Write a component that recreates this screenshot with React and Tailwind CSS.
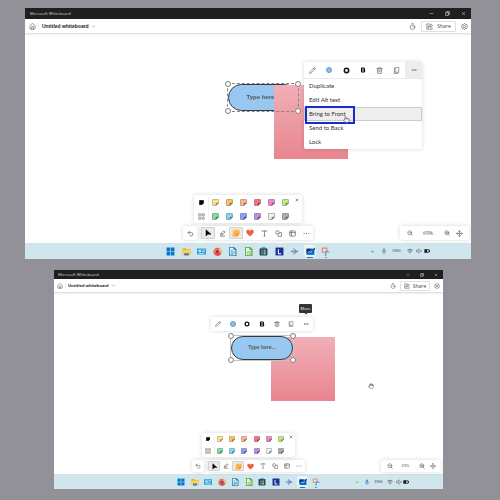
import React from "react";
import {
  Bold, ChevronDown, ChevronUp, Ellipsis, Hand, House, Minus, Move,
  Pencil, Pointer, Timer, Trash2, Undo2, X, ZoomIn, ZoomOut,
} from "lucide-react";

const large = {
  window: "ml-[25px] mr-[29px]",
  titleBar: "h-[11px] pl-[5px] text-[4px]",
  windowButton: "w-4 h-[11px]",
  header: "h-[14px] pl-[3px] pr-[2px]",
  title: "text-[5px] leading-[6px] font-['Liberation_Sans',sans-serif]",
  homeButton: "w-2 mr-[2px]",
  divider: "mr-[3px]",
  timer: "w-2 mr-[5px]",
  share: "h-[11px] w-[35px] gap-[4px] text-[5px]",
  settings: "w-[10px] ml-[3px]",
  canvas: "h-[210px] pb-[3px]",
  palette: "h-[28px] w-[108px] pr-[10px]",
  sticky: "size-[7px]",
  close: "top-[3px] right-[3px]",
  paletteDivider: "left-[14px]",
  undo: "w-[14px]",
  tools: "h-[14px] w-[112px]",
  toolButton: "h-[12px]",
  tool: "size-[8px]",
  zoom: "h-[14px] w-[69px] mr-[2px] text-[5px]",
  zoomText: "w-[24px]",
  zoomButton: "w-[13px]",
  taskbar: "h-[16px]",
  apps: "w-[165px]",
  app: "size-[10px]",
  appGlyph: "size-[9px]",
  tray: "mr-[40px] text-[4px]",
  chevronCell: "w-[11px]",
  langCell: "w-[15px]",
  trayCell: "w-[8px]",
  icon: "size-[7px]",
  trayIcon: "size-[6px]",
  smallIcon: "size-[5px]",
  pill: "left-[203px] top-[51px] w-[70px] h-[27px] text-[6px]",
  square: "left-[249px] top-[52px] size-[74px]",
  popup: "left-[279px] top-[29px] w-[118px]",
  popupBar: "h-[16px]",
};

const small = {
  window: "ml-[54px] mr-[57px]",
  titleBar: "h-[9px] pl-[4px] text-[4px]",
  windowButton: "w-[14px] h-[9px]",
  header: "h-[13px] pl-[2px] pr-[2px]",
  title: "text-[4px] leading-[5px] font-['Open_Sans',sans-serif]",
  homeButton: "w-2 mr-[1px]",
  divider: "mr-[2px]",
  timer: "w-[7px] mr-[4px]",
  share: "h-[10px] w-[30px] gap-[3px] text-[5px]",
  settings: "w-[8px] ml-[3px]",
  canvas: "h-[182px] pb-[2px]",
  palette: "h-[24px] w-[93px] pr-[8px]",
  sticky: "size-[6px]",
  close: "top-[2px] right-[2px]",
  paletteDivider: "left-[12px]",
  undo: "w-[12px]",
  tools: "h-[12px] w-[97px]",
  toolButton: "h-[10px]",
  tool: "size-[7px]",
  zoom: "h-[12px] w-[60px] mr-[2px] text-[4px]",
  zoomText: "w-[21px]",
  zoomButton: "w-[11px]",
  taskbar: "h-[15px]",
  apps: "w-[144px]",
  app: "size-[9px]",
  appGlyph: "size-[8px]",
  tray: "mr-[34px] text-[4px]",
  chevronCell: "w-[10px]",
  langCell: "w-[13px]",
  trayCell: "w-[7px]",
  icon: "size-[6px]",
  trayIcon: "size-[6px]",
  smallIcon: "size-[4px]",
  pill: "left-[177px] top-[44px] w-[62px] h-[24px] text-[5px]",
  square: "left-[217px] top-[45px] size-[64px]",
  popup: "left-[157px] top-[25px] w-[102px]",
  popupBar: "h-[14px]",
};

const cell = "flex items-center justify-center";
const floating = "bg-white rounded-[2px] shadow-[0_0_4px_rgba(0,0,0,0.16)]";

function Glyph({ className, children }) {
  return (
    <svg viewBox="0 0 16 16" className={className} fill="none" aria-hidden="true">
      {children}
    </svg>
  );
}

function GearIcon({ className }) {
  return (
    <Glyph className={className}>
      <path d="M8 1l2 2 3 .3.5 2.7L15 8l-1.500 2-.5 2.700-3 .3-2 2-2-2-3-.3-.5-2.700L1 8l1.500-2 .5-2.700 3-.3z" stroke="#555" strokeWidth="1.500" />
      <circle cx="8" cy="8" r="2.300" stroke="#555" strokeWidth="1.500" />
    </Glyph>
  );
}

function RestoreIcon({ className }) {
  return (
    <Glyph className={className}>
      <path d="M2 5h9v9H2z M5 4V2h9v9h-2" stroke="#ddd" strokeWidth="2" />
    </Glyph>
  );
}

function ShareIcon({ className }) {
  return (
    <Glyph className={className}>
      <path d="M7 2H2v12h12v-3M10 2l5 4-5 4V7.500C7 7.500 6 9 5 11c0-4 2-6.500 5-6.500z" stroke="#555" strokeWidth="1.500" />
    </Glyph>
  );
}

function StickyNote({ fill, edge, className }) {
  return (
    <Glyph className={className}>
      <path d="M2.500 1h11Q15 1 15 2.500V9l-6 6H2.500Q1 15 1 13.500v-11Q1 1 2.500 1z" fill={fill} stroke={edge} strokeWidth="1.300" />
      <path d="M15 9H10.500Q9 9 9 10.500V15z" fill={edge} stroke={edge} strokeWidth="1" />
    </Glyph>
  );
}

function GridIcon({ className }) {
  return (
    <Glyph className={className}>
      <g stroke="#666" strokeWidth="1.500">
        <rect x="1.500" y="1.500" width="5" height="5" rx="1" />
        <rect x="9.500" y="1.500" width="5" height="5" rx="1" />
        <rect x="1.500" y="9.500" width="5" height="5" rx="1" />
        <rect x="9.500" y="9.500" width="5" height="5" rx="1" />
      </g>
    </Glyph>
  );
}

const toolIcons = {
  Select: <path d="M4 1.500v12.500l3.500-3.500H14z" fill="#000" stroke="#000" />,
  Ink: <path d="M3 11l2-4 6-5 2.500 2.500-5 6-4 1.500zM5 7l3.500 3.500M2 14h12" stroke="#555" strokeWidth="1.500" />,
  Notes: (
    <>
      <path d="M2 1h12q1 0 1 1v8l-5 5H2q-1 0-1-1V2q0-1 1-1z" fill="#ffd060" />
      <path d="M4 3h10q1 0 1 1v6l-5 5H1z" fill="#ffb347" />
      <path d="M15 9l-6 6V11q0-2 2-2z" fill="#f57a45" />
    </>
  ),
  Reactions: <path d="M8 15C3 11 .5 8.500 .5 5.200.5 1 6 .2 8 4c2-3.800 7.500-3 7.500 1.200C15.500 8.500 13 11 8 15z" fill="#f0603f" />,
  Text: <path d="M3 4.500V2h10v2.500M8 2v12M6 14h4" stroke="#555" strokeWidth="1.500" />,
  Shapes: (
    <g stroke="#555" strokeWidth="1.500">
      <circle cx="5.500" cy="5.500" r="4" />
      <path d="M11 6h3q1 0 1 1v7q0 1-1 1H8q-1 0-1-1v-3" />
      <path d="M7 10l4-4" />
    </g>
  ),
  Templates: (
    <g stroke="#555" strokeWidth="1.500">
      <rect x="1.500" y="2" width="13" height="12" rx="2" />
      <path d="M1.500 6h13M5.500 2v12" />
    </g>
  ),
  More: (
    <g fill="#555">
      <circle cx="2.500" cy="8" r="1.300" />
      <circle cx="8" cy="8" r="1.300" />
      <circle cx="13.500" cy="8" r="1.300" />
    </g>
  ),
};

const coloredTools = ["Select", "Notes", "Reactions"];

const stickyRows = [
  [["#fbe388", "#9b8a55"], ["#fcc35c", "#94713c"], ["#f9b58d", "#96705a"], ["#ee7482", "#8c4650"], ["#f185c9", "#8f5079"], ["#c1e883", "#728a50"]],
  [["#81dca7", "#4d7f62"], ["#84d5f3", "#4c7b8d"], ["#8e9ff5", "#515a8e"], ["#bd91df", "#6a517e"], ["#f2f2f2", "#777777"], ["#acacac", "#666666"]],
];

const appGlyphs = [
  ["Start", <g fill="#0878cf"><path d="M1 1h6.500v6.500H1zM8.500 1H15v6.500H8.500zM1 8.500h6.500V15H1zM8.500 8.500H15V15H8.500z" /></g>],
  ["Files", <><path d="M1 2h5l2 2h7v10H1z" fill="#f4a91f" /><path d="M1 5h14v10H1z" fill="#ffd257" /><path d="M4 11h8v4H4z" fill="#2483cf" /></>],
  ["Control Panel", <><rect x="0" y="2.500" width="16" height="11" rx="1" fill="#2f9bd8" /><circle cx="5" cy="7" r="2.500" fill="#bdeaff" /><path d="M9 5h5M9 8h5M3 11.500h10" stroke="#d8f4ff" strokeWidth="1.300" /></>],
  ["Firefox", <><circle cx="8" cy="8.500" r="7" fill="#ff5933" /><path d="M1 8Q1 3 5 2l1 2q5-3 9 3-1 8-7 8-4-1-5-5z" fill="#ff8a2b" /><circle cx="8" cy="8.500" r="3.500" fill="#8a3fa8" /><path d="M11 1q5 4 3 10l-3-5z" fill="#ffcf3b" /><path d="M1.500 9q2 6 7 6t6-5q-3 3-7 2.500T1.500 9z" fill="#f23d4f" /></>],
  ["Writer", <><path d="M2 0h9l4 4v12H2z" fill="#2482b5" /><path d="M3.500 1.500h6V5H13v9.500H3.500z" fill="#e7f6fd" /><path d="M5 6h3M5 8.500h7M5 11h7M5 13h4" stroke="#2482b5" strokeWidth="1.200" /></>],
  ["Calc", <><path d="M2 0h9l4 4v12H2z" fill="#48a33f" /><path d="M3.500 1.500h6V5H13v9.500H3.500z" fill="#ebf9df" /><path d="M6 8h6v5H6zM6 10.500h6" stroke="#6fbd5f" strokeWidth="1.200" /></>],
  ["Store", <><rect x="1" y="2" width="14" height="13" rx="1.500" fill="#174c75" /><path d="M5 3V1h6v2" stroke="#2b9bdc" strokeWidth="1.500" /><path d="M4 5h3.500v3.500H4z" fill="#ef4f27" /><path d="M8.500 5H12v3.500H8.500z" fill="#83c331" /><path d="M4 9.500h3.500V13H4z" fill="#21a8e5" /><path d="M8.500 9.500H12V13H8.500z" fill="#f9bd23" /></>],
  ["Notes", <><rect x="1" y="1" width="14" height="14" fill="#1b2f9c" /><path d="M6 4v8h5" stroke="#fff" strokeWidth="1.800" /></>],
  ["Audio", <><path d="M1 8h14M4 5.500v5" stroke="#6f9fd0" strokeWidth="1.600" /><path d="M7 2v12" stroke="#7b91c6" strokeWidth="1.600" /><path d="M9 4l5 4-5 4z" fill="#5a90d6" /><path d="M9.500 4.500v7" stroke="#d9686c" strokeWidth="1.400" /></>],
  ["Whiteboard", <><path d="M1 3h14v11H1z" fill="#1264ce" /><path d="M1 3h9l-9 8z" fill="#102d73" /><path d="M4 10q2-4 3-1t3-1l4-5" stroke="#8fdcff" strokeWidth="1.600" /><path d="M11 6l4-5 1 2-4 5z" fill="#153066" /></>],
  ["Snipping Tool", <><path d="M2.500 2h8v7h-8z" fill="#f6ded8" stroke="#e08a78" strokeWidth="2" /><path d="M8 7l7 2M8 14l2-8" stroke="#4aa3da" strokeWidth="2" /><circle cx="8" cy="14" r="1.500" fill="#4aa3da" /></>],
];

function TitleBar({ s }) {
  return (
    <div className={`flex items-center bg-[#1f1f1f] text-[#d5d5d5] ${s.titleBar}`}>
      <span className="flex-1 leading-[6px]">Microsoft Whiteboard</span>
      <button aria-label="Minimize" className={`${cell} ${s.windowButton}`}><Minus className={s.smallIcon} strokeWidth={2.5} /></button>
      <button aria-label="Restore" className={`${cell} ${s.windowButton}`}><RestoreIcon className={s.smallIcon} /></button>
      <button aria-label="Close" className={`${cell} ${s.windowButton}`}><X className={s.smallIcon} strokeWidth={2.5} /></button>
    </div>
  );
}

function Header({ s }) {
  return (
    <header className={`relative flex items-center bg-white text-[#444] shadow-[0_1px_2px_rgba(0,0,0,0.18)] ${s.header}`}>
      <button aria-label="Home" className={`${cell} ${s.homeButton}`}><House className={s.icon} strokeWidth={1.8} /></button>
      <span className={`h-[6px] w-px bg-[#e9e9e9] ${s.divider}`} />
      <button className={`flex items-center gap-[2px] font-bold text-[#222] ${s.title}`}>
        Untitled whiteboard
        <ChevronDown className="size-[5px] text-[#666]" strokeWidth={2} />
      </button>
      <span className="flex-1" />
      <button aria-label="Timer" className={`${cell} ${s.timer}`}><Timer className={s.icon} strokeWidth={1.8} /></button>
      <button className={`${cell} rounded-[1px] border border-[#e0e0e0] bg-white leading-[6px] ${s.share}`}>
        <ShareIcon className={s.icon} />
        Share
      </button>
      <button aria-label="Settings" className={`${cell} ${s.settings}`}><GearIcon className={s.icon} /></button>
    </header>
  );
}

function Palette({ s }) {
  return (
    <div className={`relative flex flex-col ${floating} ${s.palette}`}>
      {stickyRows.map((row, i) => (
        <div key={i} className="flex flex-1">
          <button aria-label={i ? "All notes" : "Note"} className={`${cell} flex-1`}>
            {i ? <GridIcon className={s.sticky} /> : <StickyNote fill="#000" edge="#000" className={s.smallIcon} />}
          </button>
          {row.map(([fill, edge]) => (
            <button key={fill} aria-label="Sticky note" className={`${cell} flex-1`}>
              <StickyNote fill={fill} edge={edge} className={s.sticky} />
            </button>
          ))}
        </div>
      ))}
      <span className={`absolute inset-y-[2px] w-px bg-[#f3f3f3] ${s.paletteDivider}`} />
      <button aria-label="Close notes" className={`absolute ${s.close}`}><X className="size-[4px] text-[#333]" strokeWidth={3} /></button>
    </div>
  );
}

function Toolbar({ s }) {
  return (
    <div className="flex gap-[4px]">
      <button aria-label="Undo" className={`${cell} ${floating} ${s.undo}`}><Undo2 className={`text-[#444] ${s.icon}`} strokeWidth={2} /></button>
      <div className={`flex items-center ${floating} ${s.tools}`}>
        {Object.entries(toolIcons).map(([name, drawing]) => (
          <button
            key={name}
            aria-label={name}
            className={`${cell} flex-1 rounded-[1px] border ${s.toolButton} ${name === "Select" || name === "Notes" ? "border-[#d2d2d2] bg-[#ebebeb]" : "border-transparent"}`}
          >
            <Glyph className={coloredTools.includes(name) ? s.tool : s.icon}>{drawing}</Glyph>
          </button>
        ))}
      </div>
    </div>
  );
}

function ZoomBar({ s }) {
  return (
    <div className={`flex items-center justify-center self-end justify-self-end text-[#555] ${floating} ${s.zoom}`}>
      <button aria-label="Zoom out" className={`${cell} ${s.zoomButton}`}><ZoomOut className={s.trayIcon} strokeWidth={2.2} /></button>
      <span className={`text-center leading-[6px] ${s.zoomText}`}>69%</span>
      <button aria-label="Zoom in" className={`${cell} ${s.zoomButton}`}><ZoomIn className={s.trayIcon} strokeWidth={2.2} /></button>
      <button aria-label="Fit to screen" className={`${cell} ${s.zoomButton}`}><Move className={s.icon} strokeWidth={2} /></button>
    </div>
  );
}

function Taskbar({ s }) {
  return (
    <footer className={`grid grid-cols-[1fr_auto_1fr] items-center bg-[#cfe6ed] ${s.taskbar}`}>
      <span />
      <nav className={`flex items-center justify-between ${s.apps}`}>
        {appGlyphs.map(([name, drawing]) => (
          <button key={name} aria-label={name} className={`relative ${cell} ${s.app} ${name === "Whiteboard" ? "rounded-[1px] bg-[#e9f5f9] outline-1 outline-[#e9f5f9]" : ""}`}>
            <Glyph className={s.appGlyph}>{drawing}</Glyph>
            {name === "Whiteboard" && <span className="absolute inset-x-[2px] -bottom-[2px] h-px bg-[#1976c8]" />}
            {name === "Snipping Tool" && <span className="absolute -bottom-[2px] left-1/2 h-px w-[2px] -translate-x-1/2 bg-[#7f949b]" />}
          </button>
        ))}
      </nav>
      <div className={`flex items-center justify-self-end text-[#444] ${s.tray}`}>
        <span className={`${cell} ${s.chevronCell}`}><ChevronUp className={s.smallIcon} strokeWidth={3} /></span>
        <span className={`${cell} ${s.chevronCell}`}>
          <Glyph className={s.trayIcon}>
            <rect x="5" y="1" width="6" height="9" rx="3" fill="#5d93cb" />
            <path d="M3 8q0 5 5 5t5-5M8 13v3" stroke="#3f7dbd" strokeWidth="1.500" />
          </Glyph>
        </span>
        <span className={`${cell} leading-[6px] ${s.langCell}`}>ENG</span>
        <span className={`${cell} ${s.chevronCell}`}>
          <Glyph className={s.trayIcon}>
            <path d="M1 6q7-6 14 0M3.500 9q4.500-4 9 0" stroke="#444" strokeWidth="1.800" />
            <path d="M5.500 11.500Q8 9.500 10.500 11.500L8 14z" fill="#444" />
          </Glyph>
        </span>
        <span className={`${cell} ${s.trayCell}`}>
          <Glyph className={s.trayIcon}>
            <path d="M1 6h3l4-4v12l-4-4H1zM11 6l4 4M15 6l-4 4" stroke="#444" strokeWidth="1.300" />
          </Glyph>
        </span>
        <span className={`${cell} ${s.trayCell}`}>
          <Glyph className={s.trayIcon}>
            <rect x="1" y="4" width="12" height="8" rx="1" stroke="#222" strokeWidth="1.800" />
            <path d="M3 5h5v6H3zM14 6h2v4h-2z" fill="#111" stroke="#111" />
          </Glyph>
        </span>
      </div>
    </footer>
  );
}

const handle = "absolute size-[6px] rounded-full border border-[#808080] bg-white";

function Selection({ s, dashed }) {
  return (
    <div className={`absolute outline-1 ${dashed ? "outline-dashed outline-[#8f8084]" : "outline-solid outline-[#c4c4c4]"} ${s.pill}`}>
      <span className={`${handle} -left-[3px] -top-[3px]`} />
      <span className={`${handle} -right-[3px] -top-[3px]`} />
      <span className={`${handle} -left-[3px] -bottom-[3px]`} />
      <span className={`${handle} -right-[3px] -bottom-[3px]`} />
    </div>
  );
}

function Pill({ s }) {
  return (
    <div className={`absolute ${cell} rounded-full border border-[#333c45] bg-[#98c8ef] font-['Liberation_Sans',sans-serif] font-bold text-[#4f5a64] ${s.pill}`}>
      Type here...
    </div>
  );
}

function PinkNote({ s }) {
  return <div className={`absolute bg-linear-to-b from-[#f0afb7] to-[#e8858f] ${s.square}`} />;
}

function FormatBar({ s, open }) {
  const items = [
    ["Edit", <Pencil className={s.icon} strokeWidth={1.8} />],
    ["Fill", <span className={`rounded-full border border-[#6d9cc4] bg-[#84bff0] ${s.trayIcon}`} />],
    ["Border", <Glyph className={s.icon}><circle cx="8" cy="8" r="5" stroke="#111" strokeWidth="3.500" /></Glyph>],
    ["Bold", <Bold className={`text-black ${s.trayIcon}`} strokeWidth={4.5} />],
    ["Delete", <Trash2 className={s.icon} strokeWidth={1.8} />],
    ["Copy", <Glyph className={s.icon}><path d="M5 1h8v11H5zM5 3H3v12h8v-3" stroke="#555" strokeWidth="1.300" strokeLinejoin="round" /></Glyph>],
    ["More", <Ellipsis className={s.trayIcon} strokeWidth={2} />],
  ];
  return (
    <div className={`flex text-[#444] ${s.popupBar}`}>
      {items.map(([name, icon]) => (
        <button key={name} aria-label={name} className={`${cell} flex-1 ${open && name === "More" ? "bg-[#ededed]" : ""}`}>{icon}</button>
      ))}
    </div>
  );
}

function ContextMenu() {
  return (
    <ul className="border-t border-[#e9e9e9] font-['Lato',sans-serif] text-[6px] leading-[12px] text-[#333]">
      {["Duplicate", "Edit Alt text", "Bring to Front", "Send to Back", "Lock"].map((label) => {
        const active = label === "Bring to Front";
        return (
          <li key={label} className="relative">
            <button className={`block w-full border pl-[4px] text-left ${active ? "border-[#cccccc] bg-[#eeeeee]" : "border-transparent"}`}>{label}</button>
            {active && (
              <>
                <span className="absolute -top-px left-px h-[18px] w-[50px] border-2 border-[#1b2bc9]" />
                <Pointer className="absolute left-[39px] top-[9px] size-[7px] fill-white text-[#555]" strokeWidth={2} />
              </>
            )}
          </li>
        );
      })}
    </ul>
  );
}

function WhiteboardWindow({ s, children }) {
  return (
    <section className={`flex flex-col overflow-hidden bg-white ${s.window}`}>
      <TitleBar s={s} />
      <Header s={s} />
      <main className={`relative flex flex-col justify-end ${s.canvas}`}>
        {children}
        <div className="grid grid-cols-[1fr_auto_1fr]">
          <span />
          <div className="flex flex-col items-center gap-[3px]">
            <Palette s={s} />
            <Toolbar s={s} />
          </div>
          <ZoomBar s={s} />
        </div>
      </main>
      <Taskbar s={s} />
    </section>
  );
}

export default function App() {
  return (
    <div className="flex min-h-screen flex-col gap-[11px] bg-[#929197] pb-[11px] pt-2 font-['Open_Sans',sans-serif]">
      <WhiteboardWindow s={large}>
        <Pill s={large} />
        <PinkNote s={large} />
        <Selection s={large} dashed />
        <div className={`absolute ${floating} ${large.popup}`}>
          <FormatBar s={large} open />
          <ContextMenu />
        </div>
      </WhiteboardWindow>
      <WhiteboardWindow s={small}>
        <PinkNote s={small} />
        <Pill s={small} />
        <Selection s={small} />
        <div className={`absolute ${floating} ${small.popup}`}>
          <FormatBar s={small} />
          <div role="tooltip" className="absolute -top-[13px] right-px h-[9px] w-[13px] rounded-[1px] bg-[#333] text-center text-[4px] leading-[9px] text-white">
            More
            <span className="absolute -bottom-px left-1/2 size-[3px] -translate-x-1/2 rotate-45 bg-[#333]" />
          </div>
        </div>
        <Hand className="absolute left-[314px] top-[91px] size-[6px] text-[#555]" strokeWidth={2} />
      </WhiteboardWindow>
    </div>
  );
}
